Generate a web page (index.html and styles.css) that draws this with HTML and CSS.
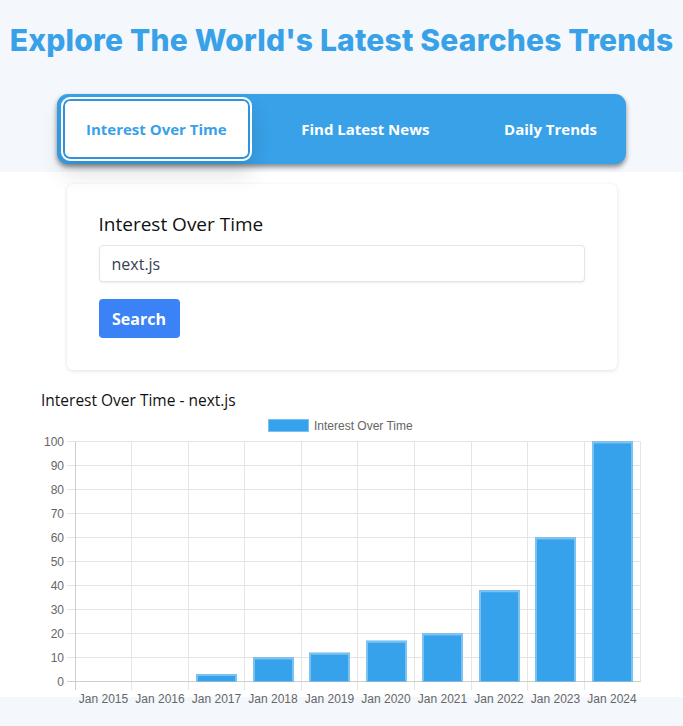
FILE: index.html
```html
<!DOCTYPE html>
<html lang="en">
<head>
<meta charset="utf-8">
<title>Explore The World's Latest Searches Trends</title>
<link rel="stylesheet" href="styles.css">
</head>
<body>
<header class="top">
  <h1 class="title">Explore The World's Latest Searches Trends</h1>
  <nav class="tabs">
    <button class="tab active">Interest Over Time</button>
    <button class="tab">Find Latest News</button>
    <button class="tab">Daily Trends</button>
  </nav>
</header>
<main class="main">
  <section class="card">
    <h2 class="card-title">Interest Over Time</h2>
    <input class="query" type="text" value="next.js">
    <button class="search">Search</button>
  </section>
  <section class="chart">
    <h3 class="chart-title">Interest Over Time - next.js</h3>
    <svg class="chart-svg" width="600" height="300" viewBox="0 0 600 300" xmlns="http://www.w3.org/2000/svg">
      <g font-family="Liberation Sans, Arial, sans-serif" font-size="12" fill="#666">
        <rect x="227.5" y="9.5" width="40" height="12" fill="#36a2eb" stroke="#7cc2f1" stroke-width="1"/>
        <text x="273" y="19.5">Interest Over Time</text>
      </g>
      <!-- horizontal grid -->
      <g stroke="#e4e4e4" stroke-width="1">
        <line x1="26" y1="31.5" x2="600" y2="31.5"/>
        <line x1="26" y1="55.5" x2="600" y2="55.5"/>
        <line x1="26" y1="79.5" x2="600" y2="79.5"/>
        <line x1="26" y1="103.5" x2="600" y2="103.5"/>
        <line x1="26" y1="127.5" x2="600" y2="127.5"/>
        <line x1="26" y1="151.5" x2="600" y2="151.5"/>
        <line x1="26" y1="175.5" x2="600" y2="175.5"/>
        <line x1="26" y1="199.5" x2="600" y2="199.5"/>
        <line x1="26" y1="223.5" x2="600" y2="223.5"/>
        <line x1="26" y1="247.5" x2="600" y2="247.5"/>
      </g>
      <!-- vertical grid -->
      <g stroke="#e4e4e4" stroke-width="1">
        <line x1="90.5" y1="31.5" x2="90.5" y2="280"/>
        <line x1="147.5" y1="31.5" x2="147.5" y2="280"/>
        <line x1="203.5" y1="31.5" x2="203.5" y2="280"/>
        <line x1="260.5" y1="31.5" x2="260.5" y2="280"/>
        <line x1="316.5" y1="31.5" x2="316.5" y2="280"/>
        <line x1="373.5" y1="31.5" x2="373.5" y2="280"/>
        <line x1="430.5" y1="31.5" x2="430.5" y2="280"/>
        <line x1="486.5" y1="31.5" x2="486.5" y2="280"/>
        <line x1="543.5" y1="31.5" x2="543.5" y2="280"/>
        <line x1="599.5" y1="31.5" x2="599.5" y2="271.5"/>
      </g>
      <g stroke="#cfcfcf" stroke-width="1">
        <line x1="34.5" y1="31.5" x2="34.5" y2="280"/>
        <line x1="26" y1="271.5" x2="600" y2="271.5"/>
      </g>
      <!-- y labels -->
      <g font-family="Liberation Sans, Arial, sans-serif" font-size="12" fill="#666" text-anchor="end">
        <text x="23" y="35.5">100</text>
        <text x="23" y="59.5">90</text>
        <text x="23" y="83.5">80</text>
        <text x="23" y="107.5">70</text>
        <text x="23" y="131.5">60</text>
        <text x="23" y="155.5">50</text>
        <text x="23" y="179.5">40</text>
        <text x="23" y="203.5">30</text>
        <text x="23" y="227.5">20</text>
        <text x="23" y="251.5">10</text>
        <text x="23" y="275.5">0</text>
      </g>
      <!-- bars -->
      <g fill="#36a2eb">
        <rect x="155" y="264" width="41" height="7.5"/>
        <rect x="212" y="247.5" width="41" height="24"/>
        <rect x="268" y="242.7" width="41" height="28.8"/>
        <rect x="325" y="230.7" width="41" height="40.8"/>
        <rect x="381" y="223.5" width="41" height="48"/>
        <rect x="438" y="180.3" width="41" height="91.2"/>
        <rect x="494" y="127.5" width="41" height="144"/>
        <rect x="551" y="31.5" width="41" height="240"/>
      </g>
      <g fill="none" stroke="#7cc2f1" stroke-width="2">
        <path d="M156 271 V265 H195 V271"/>
        <path d="M213 271 V248.5 H252 V271"/>
        <path d="M269 271 V243.7 H308 V271"/>
        <path d="M326 271 V231.7 H365 V271"/>
        <path d="M382 271 V224.5 H421 V271"/>
        <path d="M439 271 V181.3 H478 V271"/>
        <path d="M495 271 V128.5 H534 V271"/>
        <path d="M552 271 V32.5 H591 V271"/>
      </g>
      <!-- x labels -->
      <g font-family="Liberation Sans, Arial, sans-serif" font-size="12" fill="#666" text-anchor="middle">
        <text x="62.5" y="293">Jan 2015</text>
        <text x="119" y="293">Jan 2016</text>
        <text x="175.5" y="293">Jan 2017</text>
        <text x="232" y="293">Jan 2018</text>
        <text x="288.5" y="293">Jan 2019</text>
        <text x="345" y="293">Jan 2020</text>
        <text x="401.5" y="293">Jan 2021</text>
        <text x="458" y="293">Jan 2022</text>
        <text x="514.5" y="293">Jan 2023</text>
        <text x="571" y="293">Jan 2024</text>
      </g>
    </svg>
  </section>
</main>
</body>
</html>
```
FILE: styles.css
```css
* { box-sizing: border-box; }
html, body { margin: 0; padding: 0; }
html { background: #f4f8fc; }
body {
  min-height: 726px;
  background: linear-gradient(to bottom, #f4f8fc 0, #f4f8fc 172px, #fff 172px, #fff 697px, #f4f8fc 697px);
  font-family: "Open Sans", "Noto Sans", sans-serif;
  color: #111;
}
.top {
  height: 172px;
  padding-top: 18px;
}
.title {
  margin: 0;
  text-align: center;
  font-family: Inter, "Open Sans", sans-serif;
  font-weight: 800;
  font-size: 30px;
  line-height: 44px;
  letter-spacing: 0.2px;
  color: #38a1e8;
}
.tabs {
  width: 569px;
  height: 70px;
  margin: 32px auto 0;
  padding: 3px 4px;
  background: #38a1e8;
  border-radius: 11px;
  box-shadow: 0 3px 5px rgba(0, 0, 0, 0.45);
  display: flex;
  justify-content: space-between;
  align-items: stretch;
}
.tab {
  border: 2px solid transparent;
  background: transparent;
  padding: 0 23px;
  border-radius: 9px;
  font-family: "Open Sans", "Noto Sans", sans-serif;
  font-weight: 700;
  font-size: 15px;
  letter-spacing: 0;
  color: #fff;
}
.tab.active {
  background: #fff;
  border-color: #fff;
  color: #38a1e8;
  box-shadow: inset 0 0 0 2px #2d93de, 0 12px 22px rgba(0, 0, 0, 0.13);
}
.main {
  padding-top: 12px;
}
.card {
  width: 550px;
  margin: 0 auto;
  padding: 26px 32px 32px;
  background: #fff;
  border-radius: 6px;
  box-shadow: 0 1px 4px rgba(0, 0, 0, 0.12);
}
.card-title {
  margin: 0 0 7px;
  font-size: 19px;
  line-height: 28px;
  font-weight: 500;
  color: #111;
}
.query {
  display: block;
  width: 100%;
  height: 37px;
  padding: 0 12px;
  border: 1px solid #e3e5ea;
  border-radius: 4px;
  box-shadow: 0 1px 2px rgba(0, 0, 0, 0.08);
  font-family: "Open Sans", "Noto Sans", sans-serif;
  font-size: 16px;
  font-weight: 500;
  color: #374151;
}
.search {
  display: block;
  margin-top: 17px;
  width: 81px;
  height: 39px;
  border: 0;
  border-radius: 4px;
  background: #3b82f6;
  color: #fff;
  font-family: "Open Sans", "Noto Sans", sans-serif;
  font-weight: 700;
  font-size: 16px;
}
.chart {
  width: 600px;
  margin: 20px 0 0 41px;
}
.chart-title {
  margin: 0;
  font-size: 15.5px;
  line-height: 20px;
  font-weight: 500;
  color: #111;
}
.chart-svg {
  display: block;
  overflow: visible;
}
```
